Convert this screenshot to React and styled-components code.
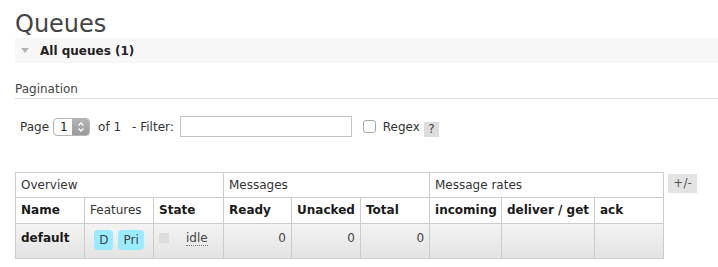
import React from "react";
import styled, { createGlobalStyle } from "styled-components";

const Global = createGlobalStyle`
  html, body { margin: 0; padding: 0; background: #fff; }
  body {
    font-family: "DejaVu Sans", Verdana, sans-serif;
    font-size: 12px;
    color: #444;
  }
`;

const Page = styled.div`
  padding-left: 15px;
`;

const Title = styled.h1`
  margin: 0;
  padding-top: 11px;
  font-size: 24px;
  line-height: 27px;
  font-weight: normal;
  color: #444;
`;

const SectionBar = styled.div`
  height: 25px;
  background: #f7f7f7;
  display: flex;
  align-items: center;
  padding-left: 6px;
  gap: 11px;
`;

const Triangle = styled.span`
  width: 0;
  height: 0;
  border-left: 4px solid transparent;
  border-right: 4px solid transparent;
  border-top: 5px solid #b3b3b3;
  margin-top: -1px;
`;

const SectionTitle = styled.h2`
  margin: 0;
  font-size: 12px;
  line-height: 14px;
  font-weight: bold;
  color: #222;
`;

const SubHeading = styled.h3`
  margin: 0;
  padding: 19px 0 2px;
  font-size: 12px;
  line-height: 14px;
  font-weight: normal;
  color: #444;
  border-bottom: 1px solid #ddd;
`;

const Controls = styled.div`
  display: flex;
  align-items: center;
  height: 21px;
  margin-top: 17px;
  padding-left: 5px;
  color: #333;
`;

const Text = styled.span`
  margin-left: ${(p) => p.$ml || 0}px;
  line-height: 14px;
  white-space: pre;
`;

const Select = styled.div`
  margin-left: 4px;
  width: 37px;
  height: 18px;
  box-sizing: border-box;
  border: 1px solid #b5b5b5;
  border-radius: 4px;
  display: flex;
  overflow: hidden;
  background: #fff;
`;

const SelectValue = styled.span`
  flex: 1;
  padding-left: 6px;
  line-height: 16px;
  color: #222;
`;

const SelectArrows = styled.span`
  width: 17px;
  background: linear-gradient(#b4b4b4, #9a9a9a);
  display: flex;
  align-items: center;
  justify-content: center;
`;

const FilterInput = styled.input`
  margin: 0 0 0 6px;
  width: 172px;
  height: 21px;
  box-sizing: border-box;
  border: 1px solid #c4c4c4;
  padding: 0 4px;
  font: inherit;
  outline: none;
`;

const Checkbox = styled.span`
  margin-left: 11px;
  width: 13px;
  height: 13px;
  box-sizing: border-box;
  border: 1px solid #a8a8a8;
  border-radius: 3px;
  background: #fff;
`;

const HelpBox = styled.span`
  margin-left: 4px;
  align-self: flex-end;
  width: 15px;
  height: 15px;
  background: #ddd;
  color: #444;
  text-align: center;
  line-height: 15px;
`;

const TableArea = styled.div`
  display: flex;
  align-items: flex-start;
  margin-top: 35px;
`;

const Table = styled.table`
  border-collapse: collapse;
  table-layout: fixed;
  width: 649px;
`;

const Col = styled.col`
  width: ${(p) => p.$w}px;
`;

const GroupTh = styled.th`
  border: 1px solid #ccc;
  padding: 5px 5px 5px;
  line-height: 14px;
  font-size: 12px;
  font-weight: normal;
  text-align: left;
  color: #333;
  white-space: nowrap;
`;

const ColTh = styled.th`
  border: 1px solid #ccc;
  padding: 5px 5px 6px;
  line-height: 14px;
  font-size: 12px;
  font-weight: ${(p) => (p.$light ? "normal" : "bold")};
  color: ${(p) => (p.$light ? "#333" : "#1a1a1a")};
  text-align: left;
  white-space: nowrap;
`;

const DataRow = styled.tr`
  background: linear-gradient(#f3f3f3, #e3e3e3);
`;

const Td = styled.td`
  border: 1px solid #ccc;
  padding: 7px 5px 0;
  height: 27px;
  line-height: 14px;
  vertical-align: top;
  font-size: 12px;
  text-align: ${(p) => p.$align || "left"};
  font-weight: ${(p) => (p.$bold ? "bold" : "normal")};
  color: ${(p) => (p.$bold ? "#1a1a1a" : "#444")};
  white-space: nowrap;
`;

const Badges = styled.div`
  display: flex;
  justify-content: center;
  gap: 5px;
  margin-top: -1px;
`;

const Badge = styled.span`
  height: 20px;
  line-height: 20px;
  padding: 0 5px;
  border-radius: 4px;
  background: #99ebff;
  color: #444;
`;

const StateBox = styled.div`
  display: flex;
  align-items: flex-start;
`;

const StateSquare = styled.span`
  width: 10px;
  height: 10px;
  margin-top: 2px;
  margin-right: 17px;
  background: #ddd;
`;

const StateText = styled.span`
  border-bottom: 1px dotted #777;
  color: #444;
`;

const PlusMinus = styled.span`
  margin-left: 4px;
  margin-top: 2px;
  width: 29px;
  height: 19px;
  background: #e3e3e3;
  color: #555;
  text-align: center;
  line-height: 19px;
`;

const Chevrons = () => (
  <svg width="8" height="12" viewBox="0 0 8 12">
    <polyline points="1.5,4.5 4,2 6.5,4.5" fill="none" stroke="#fff" strokeWidth="1.3" />
    <polyline points="1.5,7.5 4,10 6.5,7.5" fill="none" stroke="#fff" strokeWidth="1.3" />
  </svg>
);

const widths = [69, 69, 70, 68, 69, 69, 72, 93, 69];

export default function App() {
  return (
    <Page>
      <Global />
      <Title>Queues</Title>
      <SectionBar>
        <Triangle />
        <SectionTitle>All queues (1)</SectionTitle>
      </SectionBar>
      <SubHeading>Pagination</SubHeading>
      <Controls>
        <Text>Page</Text>
        <Select>
          <SelectValue>1</SelectValue>
          <SelectArrows>
            <Chevrons />
          </SelectArrows>
        </Select>
        <Text $ml={8}>of 1</Text>
        <Text $ml={11}>- Filter:</Text>
        <FilterInput type="text" />
        <Checkbox />
        <Text $ml={7}>Regex</Text>
        <HelpBox>?</HelpBox>
      </Controls>
      <TableArea>
        <Table>
          <colgroup>
            {widths.map((w, i) => (
              <Col key={i} $w={w} />
            ))}
          </colgroup>
          <thead>
            <tr>
              <GroupTh colSpan={3}>Overview</GroupTh>
              <GroupTh colSpan={3}>Messages</GroupTh>
              <GroupTh colSpan={3}>Message rates</GroupTh>
            </tr>
            <tr>
              <ColTh>Name</ColTh>
              <ColTh $light>Features</ColTh>
              <ColTh>State</ColTh>
              <ColTh>Ready</ColTh>
              <ColTh>Unacked</ColTh>
              <ColTh>Total</ColTh>
              <ColTh>incoming</ColTh>
              <ColTh>deliver / get</ColTh>
              <ColTh>ack</ColTh>
            </tr>
          </thead>
          <tbody>
            <DataRow>
              <Td $bold>default</Td>
              <Td>
                <Badges>
                  <Badge>D</Badge>
                  <Badge>Pri</Badge>
                </Badges>
              </Td>
              <Td>
                <StateBox>
                  <StateSquare />
                  <StateText>idle</StateText>
                </StateBox>
              </Td>
              <Td $align="right">0</Td>
              <Td $align="right">0</Td>
              <Td $align="right">0</Td>
              <Td />
              <Td />
              <Td />
            </DataRow>
          </tbody>
        </Table>
        <PlusMinus>+/-</PlusMinus>
      </TableArea>
    </Page>
  );
}
